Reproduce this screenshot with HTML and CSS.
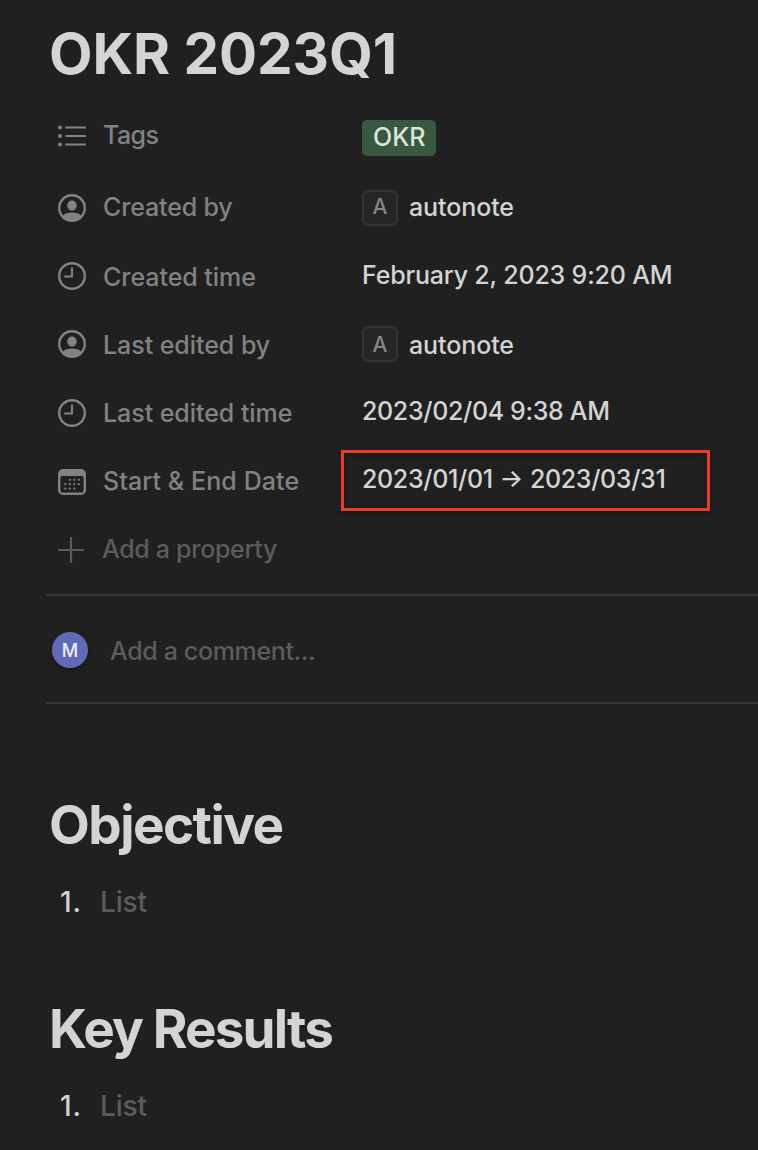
FILE: index.html
```html
<!DOCTYPE html>
<html lang="en">
<head>
<meta charset="utf-8">
<title>OKR 2023Q1</title>
<link rel="stylesheet" href="styles.css">
</head>
<body>
<svg class="sprite" aria-hidden="true">
  <symbol id="person" viewBox="0 0 28 28">
    <path fill-rule="evenodd" d="M14 0a14 14 0 1 1 0 28a14 14 0 0 1 0-28ZM14 2.4a11.6 11.6 0 0 0-8.9 19C7 19.6 10.2 18.6 14 18.6s7 1 8.9 2.800A11.600 11.600 0 0 0 14 2.400Z"/>
    <ellipse cx="14" cy="11.600" rx="4.700" ry="5"/>
  </symbol>
  <symbol id="clock" viewBox="0 0 28 28">
    <circle cx="14" cy="14" r="12.800" fill="none" stroke="currentColor" stroke-width="2.400"/>
    <path d="M14 6.200v8.300H7" fill="none" stroke="currentColor" stroke-width="2.100" stroke-linecap="round" stroke-linejoin="round"/>
  </symbol>
</svg>
<main class="page">
  <h1 class="title">OKR 2023Q1</h1>
  <section class="props">
    <div class="row row-tags">
      <svg class="icon" viewBox="0 0 28 28"><g fill="currentColor"><circle cx="2" cy="5.500" r="2"/><circle cx="2" cy="14" r="2"/><circle cx="2" cy="22.500" r="2"/></g><path d="M8.200 5.500H27M8.200 14H27M8.200 22.500H27" stroke="currentColor" stroke-width="2.200" stroke-linecap="round"/></svg>
      <span class="label label-tags">Tags</span>
      <span class="tag">OKR</span>
    </div>
    <div class="row row-created">
      <svg class="icon"><use href="#person"/></svg>
      <span class="label label-high">Created by</span>
      <span class="avatar">A</span><span class="user user-high">autonote</span>
    </div>
    <div class="row">
      <svg class="icon"><use href="#clock"/></svg>
      <span class="label">Created time</span>
      <span class="value">February 2, 2023 9:20 AM</span>
    </div>
    <div class="row">
      <svg class="icon"><use href="#person"/></svg>
      <span class="label">Last edited by</span>
      <span class="avatar avatar-low">A</span><span class="user">autonote</span>
    </div>
    <div class="row">
      <svg class="icon icon-low"><use href="#clock"/></svg>
      <span class="label">Last edited time</span>
      <span class="value value-date">2023/02/04 9:38 AM</span>
    </div>
    <div class="row">
      <svg class="icon icon-date" viewBox="0 0 28 28"><path fill-rule="evenodd" fill="currentColor" d="M5 1h18a5 5 0 0 1 5 5v16a5 5 0 0 1-5 5H5a5 5 0 0 1-5-5V6a5 5 0 0 1 5-5ZM2.400 9.500V22a2.600 2.600 0 0 0 2.600 2.600h18a2.600 2.600 0 0 0 2.600-2.600V9.500a1.500 1.500 0 0 0-1.500-1.500H3.900a1.500 1.500 0 0 0-1.500 1.500Z"/><g fill="none" stroke="currentColor" stroke-width="2.200" stroke-linecap="round" stroke-dasharray="0 4.500"><path d="M11.800 11.800H21.500M7.300 16.200H21.500M7.300 20.600H16.800"/></g></svg>
      <span class="label label-date">Start &amp; End Date</span>
      <span class="value value-date range">2023/01/01 <span class="arrow">→</span> 2023/03/31</span>
    </div>
    <div class="row row-add">
      <svg class="icon" viewBox="0 0 28 28"><path d="M1 14H25M13 2V26" stroke="currentColor" stroke-width="2.200" stroke-linecap="round"/></svg>
      <span class="label label-add">Add a property</span>
    </div>
  </section>
  <section class="comment">
    <span class="me">M</span><span class="comment-text">Add a comment...</span>
  </section>
  <section class="block">
    <h2 class="heading objective">Objective</h2>
    <div class="item"><span class="num">1.</span><span class="list">List</span></div>
  </section>
  <section class="block">
    <h2 class="heading results">Key Results</h2>
    <div class="item"><span class="num">1.</span><span class="list">List</span></div>
  </section>
</main>
</body>
</html>
```
FILE: styles.css
```css
* { box-sizing: border-box; }
body {
  margin: 0;
  background: #202020;
  color: #d4d4d4;
  font-family: Inter, "Liberation Sans", sans-serif;
  font-size: 25px;
  font-weight: 450;
}
.sprite { display: none; }
.page { height: 1150px; overflow: hidden; }
.title {
  height: 104px;
  margin: 0;
  padding: 18.500px 0 0 49px;
  font-size: 56.500px;
  line-height: 70px;
  font-weight: 750;
  letter-spacing: -0.050px;
}
.row {
  display: flex;
  align-items: center;
  height: 68px;
  padding-left: 58px;
  white-space: nowrap;
}
.row-created { margin-top: 2px; }
.icon {
  flex: none;
  width: 28px;
  height: 28px;
  color: #828282;
  fill: #828282;
}
.row-tags .icon { margin-top: -4px; }
.icon-low { margin-top: 2px; }
.icon-date { margin-top: 4px; }
.label {
  flex: none;
  width: 259px;
  margin-left: 17px;
  padding-top: 2px;
  line-height: 32px;
  color: #828282;
  letter-spacing: -0.050px;
}
.label-tags { padding: 0 0 6px; letter-spacing: -0.600px; }
.label-high { padding: 0 0 2px; letter-spacing: -0.150px; }
.label-date { letter-spacing: 0.100px; }
.tag {
  height: 36px;
  padding: 0 10px 0 11px;
  border-radius: 5px;
  background: #38583f;
  color: #dde3de;
  line-height: 34px;
}
.avatar {
  width: 36px;
  height: 36px;
  border: 2px solid #353535;
  border-radius: 7px;
  background: #252525;
  color: #858585;
  font-size: 21px;
  line-height: 29px;
  text-align: center;
}
.avatar-low { line-height: 33px; }
.user {
  margin-left: 11px;
  padding-top: 2px;
  font-weight: 500;
  line-height: 32px;
  letter-spacing: -0.100px;
}
.user-high { padding: 0 0 2px; }
.value {
  padding-bottom: 2px;
  line-height: 32px;
  letter-spacing: -0.180px;
}
.value-date { letter-spacing: -0.340px; }
.range {
  flex: none;
  width: 369px;
  height: 61px;
  margin: 1px 0 0 -21px;
  padding: 0 0 0 18px;
  border: 3px solid #e93d25;
  line-height: 52px;
  box-shadow: 0 2px 5px rgba(0, 0, 0, .35), inset 0 2px 5px rgba(0, 0, 0, .25);
}
.arrow { position: relative; top: -1px; margin: 0 0.500px; }
.row-add { padding-top: 4px; height: 80px; align-items: flex-start; }
.row-add .icon { margin-top: 18px; color: #5c5c5c; }
.label-add { margin: 13px 0 0 16px; color: #5c5c5c; letter-spacing: -0.310px; }
.comment {
  display: flex;
  align-items: center;
  height: 110px;
  margin-left: 46px;
  padding-left: 6px;
  border-top: 2px solid #373737;
  border-bottom: 2px solid #373737;
}
.me {
  width: 36px;
  height: 36px;
  margin-top: 2px;
  border-radius: 50%;
  background: #616ab8;
  box-shadow: 0 2px 4px rgba(0, 0, 0, .25);
  color: #eceefa;
  font-size: 18px;
  font-weight: 500;
  line-height: 37px;
  text-align: center;
}
.comment-text { margin-left: 22px; padding-top: 3px; color: #5c5c5c; letter-spacing: -0.350px; }
.block { height: 204px; padding-left: 49px; }
.comment + .block { margin-top: 87px; }
.heading {
  margin: 0;
  font-size: 53px;
  font-weight: 660;
  line-height: 68px;
  letter-spacing: -1.550px;
}
.results { letter-spacing: -1.850px; }
.item { display: flex; margin-top: 25px; padding-left: 11px; font-size: 28px; line-height: 36px; }
.num { width: 40px; font-weight: 500; letter-spacing: 0.800px; }
.list { color: #5c5c5c; letter-spacing: -0.150px; }
```
